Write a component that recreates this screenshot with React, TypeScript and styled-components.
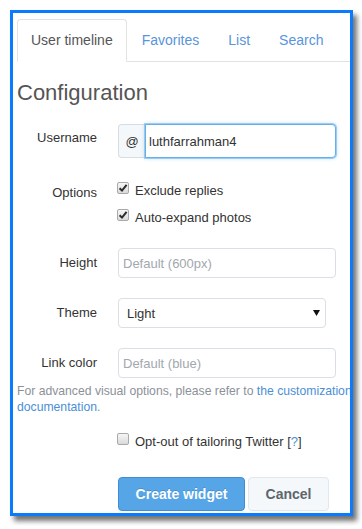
import styled, { createGlobalStyle, css } from "styled-components";

const GlobalStyle = createGlobalStyle`
  body {
    margin: 0;
    background: #fff;
    font-family: "Liberation Sans", Arial, sans-serif;
  }
`;

const tabs = ["User timeline", "Favorites", "List", "Search"];

const CheckIcon = () => (
  <svg width="10" height="10" viewBox="0 0 10 10">
    <path d="M1.6 5.2 L4 7.6 L8.6 1.8" fill="none" stroke="#2b2b2b" strokeWidth="2" />
  </svg>
);

const Check = ({ checked, children }: { checked?: boolean; children: React.ReactNode }) => (
  <CheckLine>
    <CheckBox>{checked && <CheckIcon />}</CheckBox>
    <span>{children}</span>
  </CheckLine>
);

const App = () => {
  return (
    <>
      <GlobalStyle />
      <Page>
        <Frame>
          <Inner>
            <TabsBar>
              {tabs.map((t, i) => (
                <Tab key={t} $active={i === 0}>
                  {t}
                </Tab>
              ))}
            </TabsBar>
            <Heading>Configuration</Heading>

            <Row $mt={18}>
              <Label $pt={4}>Username</Label>
              <InputGroup>
                <Addon>@</Addon>
                <FocusInput defaultValue="luthfarrahman4" readOnly />
              </InputGroup>
            </Row>

            <Row $mt={23}>
              <Label $pt={2}>Options</Label>
              <CheckList>
                <Check checked>Exclude replies</Check>
                <Check checked>Auto-expand photos</Check>
              </CheckList>
            </Row>

            <Row $mt={20}>
              <Label $pt={5}>Height</Label>
              <TextInput placeholder="Default (600px)" />
            </Row>

            <Row $mt={20}>
              <Label $pt={5}>Theme</Label>
              <SelectWrap>
                <Select defaultValue="light">
                  <option value="light">Light</option>
                  <option value="dark">Dark</option>
                </Select>
                <Arrow width="7" height="6" viewBox="0 0 7 6">
                  <path d="M0 0 H7 L3.5 6 Z" fill="#111" />
                </Arrow>
              </SelectWrap>
            </Row>

            <Row $mt={20}>
              <Label $pt={5}>Link color</Label>
              <TextInput placeholder="Default (blue)" />
            </Row>

            <Help>
              For advanced visual options, please refer to{" "}
              <Link>the customization</Link> <Link>documentation</Link>.
            </Help>

            <Indented $mt={17}>
              <Check>
                Opt-out of tailoring Twitter [<Link>?</Link>]
              </Check>
            </Indented>

            <Indented $mt={25}>
              <Buttons>
                <Button $primary>Create widget</Button>
                <Button>Cancel</Button>
              </Buttons>
            </Indented>
          </Inner>
        </Frame>
      </Page>
    </>
  );
};

export default App;

const Page = styled.div`
  padding: 10px;
`;

const Frame = styled.div`
  width: 343px;
  height: 506px;
  box-sizing: border-box;
  border: 3px solid #0b7bfc;
  background: #fff;
  overflow: hidden;
  box-shadow: 4px 5px 5px rgba(0, 0, 0, 0.55);
`;

const Inner = styled.div`
  width: 360px;
  box-sizing: border-box;
  padding: 6px 0 0 4px;
  color: #333;
  font-size: 13px;
`;

const TabsBar = styled.div`
  display: flex;
  border-bottom: 1px solid #e2e2e2;
`;

const Tab = styled.div<{ $active?: boolean }>`
  padding: 10px 13px 11px;
  margin-right: 1px;
  margin-bottom: -1px;
  line-height: 20px;
  font-size: 14px;
  color: #5895dc;
  border: 1px solid transparent;
  border-radius: 4px 4px 0 0;
  ${({ $active }) =>
    $active &&
    css`
      color: #555;
      background: #fff;
      border-color: #e2e2e2;
      border-bottom-color: transparent;
    `}
`;

const Heading = styled.h3`
  margin: 18px 0 0;
  font-size: 22px;
  line-height: 26px;
  font-weight: 400;
  color: #555;
`;

const Row = styled.div<{ $mt: number }>`
  display: grid;
  grid-template-columns: 80px 218px;
  column-gap: 21px;
  align-items: start;
  margin-top: ${(p) => p.$mt}px;
`;

const Label = styled.label<{ $pt: number }>`
  text-align: right;
  line-height: 20px;
  padding-top: ${(p) => p.$pt}px;
  color: #333;
`;

const InputGroup = styled.div`
  display: flex;
  height: 34px;
`;

const Addon = styled.span`
  width: 27px;
  box-sizing: border-box;
  display: flex;
  align-items: center;
  justify-content: center;
  background: #f5f8fa;
  border: 1px solid #d6dde3;
  border-right: none;
  border-radius: 4px 0 0 4px;
  font-size: 13px;
  color: #333;
`;

const fieldBase = css`
  box-sizing: border-box;
  height: 30px;
  width: 100%;
  border: 1px solid #d9dfe5;
  border-radius: 4px;
  background: #fff;
  font-family: "Liberation Sans", Arial, sans-serif;
  font-size: 13px;
  color: #333;
  outline: none;
`;

const FocusInput = styled.input`
  ${fieldBase};
  height: 34px;
  flex: 1;
  min-width: 0;
  padding: 0 3px;
  border: 1px solid #66afe9;
  border-radius: 0 4px 4px 0;
  box-shadow: 0 0 0 1px rgba(102, 175, 233, 0.55), 0 0 4px rgba(102, 175, 233, 0.5);
`;

const TextInput = styled.input`
  ${fieldBase};
  padding: 0 4px;
  &::placeholder {
    color: #a2a8ae;
  }
`;

const SelectWrap = styled.div`
  position: relative;
  width: 208px;
`;

const Select = styled.select`
  ${fieldBase};
  appearance: none;
  padding: 0 8px;
`;

const Arrow = styled.svg`
  position: absolute;
  right: 6px;
  top: 12px;
  pointer-events: none;
`;

const CheckList = styled.div`
  display: flex;
  flex-direction: column;
  gap: 7px;
`;

const CheckLine = styled.div`
  display: flex;
  align-items: flex-start;
  gap: 6px;
  line-height: 20px;
  color: #333;
  margin-left: -1px;
`;

const CheckBox = styled.span`
  flex: none;
  width: 12px;
  height: 12px;
  margin-top: 1px;
  box-sizing: border-box;
  border: 1px solid #a9a9a9;
  border-radius: 2px;
  background: linear-gradient(#f6f6f6, #dadada);
  display: flex;
  align-items: center;
  justify-content: center;
`;

const Help = styled.p`
  margin: 5px 0 0;
  font-size: 12.2px;
  line-height: 16px;
  color: #8c9198;
`;

const Link = styled.a`
  color: #4a8fd6;
  text-decoration: none;
`;

const Indented = styled.div<{ $mt: number }>`
  padding-left: 101px;
  margin-top: ${(p) => p.$mt}px;
`;

const Buttons = styled.div`
  display: flex;
  gap: 3px;
`;

const Button = styled.button<{ $primary?: boolean }>`
  height: 34px;
  box-sizing: border-box;
  padding: 0 13px;
  border-radius: 4px;
  font-family: "Liberation Sans", Arial, sans-serif;
  font-size: 14px;
  font-weight: 700;
  cursor: pointer;
  width: 81px;
  background: #f5f8fa;
  border: 1px solid #e1e8ed;
  color: #5d666e;
  ${({ $primary }) =>
    $primary &&
    css`
      width: 127px;
      background: #55a5e7;
      border-color: #3d8ed6;
      color: #fff;
      text-shadow: 0 -1px 0 rgba(0, 0, 0, 0.15);
    `}
`;
